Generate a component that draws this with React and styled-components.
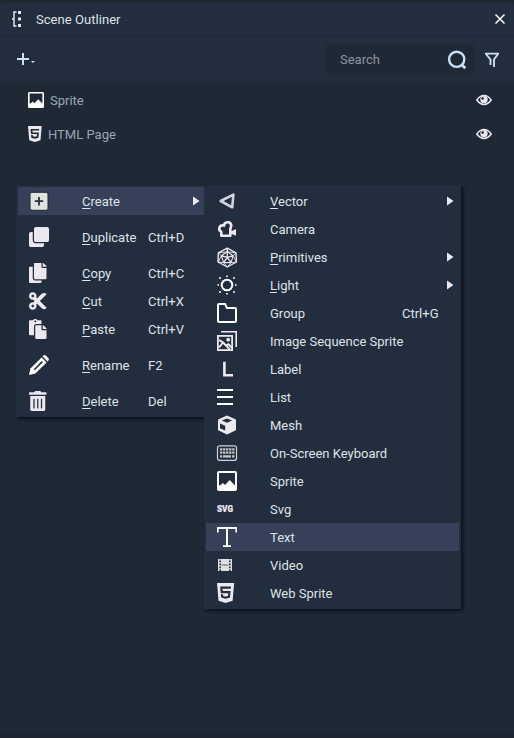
import React from "react";
import styled, { createGlobalStyle } from "styled-components";
import { FaClone, FaCopy, FaCut, FaPaste, FaTrashAlt, FaHtml5 } from "react-icons/fa";

const c = {
  body: "#1e2935",
  panel: "#222d3d",
  strip: "#1f2730",
  active: "#364159",
  text: "#dfe3e8",
  dim: "#9aa6b4",
  icon: "#ebe8f0",
  blue: "#cbe0f5",
};

const GlobalStyle = createGlobalStyle`
  *, *::before, *::after { box-sizing: border-box; }
  body { margin: 0; background: ${c.body}; overflow: hidden; }
`;

const Window = styled.main`
  position: relative;
  display: flex;
  flex-direction: column;
  width: 514px;
  height: 738px;
  background: ${c.body};
  border-top: 3px solid ${c.strip};
  border-bottom: 5px solid #1c2530;
  color: ${c.text};
  font: 13px/18px Roboto, sans-serif;
`;

const TitleBar = styled.header`
  display: flex;
  align-items: center;
  height: 33px;
  background: ${c.panel};
  border-bottom: 1px solid #1d2733;
  border-radius: 3px 3px 0 0;
`;

const Title = styled.h1`
  flex: 1;
  margin: 0;
  padding-top: 2px;
  font-size: 13px;
  font-weight: 400;
  letter-spacing: 0.05px;
`;

const Toolbar = styled.div`
  display: flex;
  align-items: center;
  height: 47px;
  background: ${c.panel};
`;

const IconButton = styled.button`
  display: flex;
  padding: 0;
  border: 0;
  background: none;
  color: inherit;
`;

const SearchBox = styled.label`
  display: flex;
  align-items: center;
  justify-content: space-between;
  width: 148px;
  height: 31px;
  margin-left: auto;
  padding-left: 14px;
  border-radius: 2px;
  background: ${c.body};
  color: #8d959f;
`;

const Tree = styled.ul`
  margin: 0;
  padding: 0;
  list-style: none;
`;

const TreeRow = styled.li`
  display: flex;
  align-items: center;
  height: 34px;
  padding: 0 22px 0 28px;
  color: ${c.dim};
`;

const TreeName = styled.span`
  flex: 1;
  margin-left: 6px;
  padding-top: 2px;
`;

const Menu = styled.ul`
  position: absolute;
  top: 182px;
  left: ${(p) => p.$left}px;
  width: ${(p) => p.$width}px;
  margin: 0;
  padding: 2px;
  list-style: none;
  background: ${c.panel};
  box-shadow: 2px 2px 3px rgba(5, 9, 16, 0.75);
`;

const MenuItem = styled.li`
  display: grid;
  grid-template-columns: 58px ${(p) => p.$labelWidth}px 1fr 12px;
  align-items: center;
  height: 28px;
  margin-top: ${(p) => (p.$separated ? 8 : 0)}px;
  padding-left: 6px;
  background: ${(p) => (p.$active ? c.active : "transparent")};
`;

const Label = styled.span`
  padding-top: 2px;
  white-space: nowrap;
`;

const Mnemonic = styled.span`
  text-decoration: underline;
  text-underline-offset: 2px;
  text-decoration-thickness: 1px;
  text-decoration-skip-ink: none;
`;

const Glyph = styled.svg`
  display: block;
  overflow: visible;
`;

const Slot = ({ children }) => (
  <Glyph width="28" height="28" viewBox="0 0 28 28" fill={c.icon} color={c.icon}>
    {children}
  </Glyph>
);

const Arrow = () => (
  <Glyph width="7" height="10" viewBox="0 0 7 10" fill={c.icon}>
    <path d="M0 .5L6.5 5L0 9.5Z" />
  </Glyph>
);

const PictureShape = () => (
  <>
    <rect x="1" y="1" width="18" height="18" rx="1" fill="none" stroke="#fff" strokeWidth="2" />
    <path d="M1 15L3.5 14L6 12L8 14L12.7 9L18 14.5H19V19H1Z" fill="#fff" />
  </>
);

const fit = { preserveAspectRatio: "xMinYMid" };

const icons = {
  create: (
    <>
      <rect x="6" y="5.3" width="18" height="18" rx="2" fill="#dfe3dc" stroke="#1c2733" strokeWidth="1" />
      <path d="M15 10V18.4M10.8 14.2H19.2" stroke="#26313f" strokeWidth="1.8" />
    </>
  ),
  duplicate: <FaClone x="5" y="4" size={20} {...fit} />,
  copy: <FaCopy x="5" y="4" size={20} {...fit} />,
  cut: <FaCut x="5" y="4" size={20} {...fit} />,
  paste: <FaPaste x="5" y="4" size={20} {...fit} />,
  rename: (
    <>
      <path d="M5 24L6.4 17.6L17.6 6.4L22.6 11.4L11.4 22.6Z" fill="#fff" />
      <path d="M10.2 18.8L18.4 10.6" stroke={c.panel} strokeWidth="1.6" />
      <path d="M18.6 5.4L19.4 4.6Q20.5 3.6 21.8 4.6L24.4 7.2Q25.4 8.5 24.4 9.6L23.6 10.4Z" fill="#fff" />
    </>
  ),
  remove: <FaTrashAlt x="5" y="4" size={20} {...fit} />,
  vector: <path d="M8.7 14L21.4 7.7L20.2 20.3Z" fill="none" stroke="#d2d4da" strokeWidth="2.6" strokeLinejoin="round" />,
  camera: (
    <>
      <path
        d="M9.3 20.8V16.9C5.8 15.2 7 9.4 12 10.6C12.2 6.4 18.6 6.2 19.2 10C19.4 11.8 18.3 12.8 18.3 14.3V20.8Z"
        fill="none" stroke={c.icon} strokeWidth="2.6" strokeLinejoin="round"
      />
      <path d="M18.5 15.8H20.5L24 13.9V20.8L20.5 19.2H18.5Z" />
    </>
  ),
  primitives: (
    <g fill="none" stroke={c.icon} strokeWidth="1.4" strokeLinejoin="round">
      <path d="M15.3 5.2L24 9.8L24.4 19L15.3 24L6 19L6.3 9.8Z" />
      <path d="M15.3 8.7L21.2 12.8L19 19.6H11.6L9.3 12.8Z" strokeWidth="1.1" />
      <path d="M15.3 5.3V14.4M9.3 12.8L15.3 14.4L21.2 12.8M11.6 19.6L15.3 14.4L19 19.6" />
      <path d="M6.5 10L9.3 12.8L6.3 19L11.6 19.6L15.3 24L19 19.6L24.4 19L21.2 12.8L24 10L15.3 8.7L6.5 10" strokeWidth=".9" />
    </g>
  ),
  light: (
    <>
      <circle cx="15" cy="14" r="5.3" fill="none" stroke="#fff" strokeWidth="2" />
      <path
        d="M15 4.4V6M15 22V23.6M5.4 14H7M23 14H24.6M7.4 6.4L8.6 7.6M21.4 20.4L22.6 21.6M22.6 6.4L21.4 7.6M8.6 20.4L7.4 21.6"
        stroke="#fff" strokeWidth="1.6"
      />
    </>
  ),
  group: (
    <path
      d="M7 5H13.2L14.8 9H23Q24 9 24 10V22Q24 23 23 23H7Q6 23 6 22V6Q6 5 7 5Z"
      fill="none" stroke="#fff" strokeWidth="2" strokeLinejoin="round"
    />
  ),
  sequence: (
    <>
      <path d="M9 4H25V20H23.4V5.6H9Z" />
      <rect x="5.9" y="8.9" width="14.2" height="14.2" fill="none" stroke={c.icon} strokeWidth="1.8" />
      <circle cx="16.2" cy="12.7" r="1.9" />
      <path d="M7 13L11.2 15.6L17.6 22.4M7 20.5L10.6 16M14.4 18.4L16.4 17.2L19.6 20.6" fill="none" stroke={c.icon} strokeWidth="2" />
    </>
  ),
  label: <path d="M12.4 6.7V20.3H21" fill="none" stroke={c.icon} strokeWidth="2.6" />,
  list: <path d="M5 6H21V8H5ZM5 13H21V15H5ZM5 20H21V22H5Z" fill="#fff" />,
  mesh: (
    <>
      <path d="M15 4.6L23.4 8.2Q24 8.5 24 9.3V18.4Q24 19.2 23.4 19.5L15 23.4L6.6 19.5Q6 19.2 6 18.4V9.3Q6 8.5 6.6 8.2Z" />
      <path d="M15 7.4L20.2 9.6L15 11.7L9.8 9.6Z" fill={c.panel} />
      <path d="M8 12.4L13.2 14.8V19.4L8 17.2Z" fill={c.panel} />
    </>
  ),
  keyboard: (
    <>
      <rect x="5.5" y="6.8" width="19" height="14.5" rx="2" fill="none" stroke="#d2d4d8" strokeWidth="1.2" />
      <path d="M8 10.4H22.5M8 13.6H22.5" stroke="#c6c9ce" strokeWidth="2.4" strokeDasharray="2.3 .75" />
      <path d="M8 17.4H10.2M11 17.4H19M20 17.4H22.5" stroke="#c6c9ce" strokeWidth="2.4" />
    </>
  ),
  sprite: <g transform="translate(5 4)"><PictureShape /></g>,
  svg: (
    <text x="5" y="17" fontFamily="Roboto, sans-serif" fontSize="8.6" fontWeight="900" textLength="16" lengthAdjust="spacingAndGlyphs" stroke={c.icon} strokeWidth=".2">
      SVG
    </text>
  ),
  text: <path d="M5 4H25V9.5H23.4V6H16V22.3H19V24H11V22.3H14V6H6.6V9.5H5Z" fill="#fff" />,
  video: (
    <>
      <path d="M6 8H20V20H6Z" fill="#e0e0e2" />
      <path d="M8.2 8V20M17.8 8V20" stroke={c.panel} strokeWidth="1.6" strokeDasharray="1.6 1.4" strokeDashoffset="-1.6" />
      <path d="M9.5 14H16.5" stroke={c.panel} strokeWidth=".7" />
    </>
  ),
  web: <FaHtml5 x="5" y="2.6" size={22.9} {...fit} />,
};

const contextItems = [
  { icon: "create", key: "C", rest: "reate", arrow: true, active: true },
  { icon: "duplicate", key: "D", rest: "uplicate", shortcut: "Ctrl+D", separated: true },
  { icon: "copy", key: "C", rest: "opy", shortcut: "Ctrl+C", separated: true },
  { icon: "cut", key: "C", rest: "ut", shortcut: "Ctrl+X" },
  { icon: "paste", key: "P", rest: "aste", shortcut: "Ctrl+V" },
  { icon: "rename", key: "R", rest: "ename", shortcut: "F2", separated: true },
  { icon: "remove", key: "D", rest: "elete", shortcut: "Del", separated: true },
];

const createItems = [
  { icon: "vector", key: "V", rest: "ector", arrow: true },
  { icon: "camera", rest: "Camera" },
  { icon: "primitives", key: "P", rest: "rimitives", arrow: true },
  { icon: "light", key: "L", rest: "ight", arrow: true },
  { icon: "group", rest: "Group", shortcut: "Ctrl+G" },
  { icon: "sequence", rest: "Image Sequence Sprite" },
  { icon: "label", rest: "Label" },
  { icon: "list", rest: "List" },
  { icon: "mesh", rest: "Mesh" },
  { icon: "keyboard", rest: "On-Screen Keyboard" },
  { icon: "sprite", rest: "Sprite" },
  { icon: "svg", rest: "Svg" },
  { icon: "text", rest: "Text", active: true },
  { icon: "video", rest: "Video" },
  { icon: "web", rest: "Web Sprite" },
];

const PopupMenu = ({ items, left, width, labelWidth }) => (
  <Menu $left={left} $width={width}>
    {items.map((it) => (
      <MenuItem key={it.icon} $labelWidth={labelWidth} $active={it.active} $separated={it.separated}>
        <Slot>{icons[it.icon]}</Slot>
        <Label>
          {it.key && <Mnemonic>{it.key}</Mnemonic>}
          {it.rest}
        </Label>
        <Label>{it.shortcut}</Label>
        {it.arrow && <Arrow />}
      </MenuItem>
    ))}
  </Menu>
);

const Eye = () => (
  <Glyph width="16" height="12" viewBox="0 0 16 12">
    <path d="M.8 6Q4 1.6 8 1.6T15.2 6Q12 10.4 8 10.4T.8 6Z" fill="none" stroke={c.icon} strokeWidth="1.5" />
    <circle cx="8" cy="5.6" r="3.7" fill={c.icon} />
    <circle cx="6.7" cy="4.5" r="1.3" fill={c.body} />
  </Glyph>
);

export default function App() {
  return (
    <>
      <GlobalStyle />
      <Window>
        <TitleBar>
          <Glyph width="36" height="32" viewBox="0 0 36 32" fill={c.icon}>
            <path d="M18 8H21V11H18ZM18 14.5H21V17.5H18ZM18 21H21V24H18Z" />
            <path d="M16.5 9H14V23H16.5M12 16H14" fill="none" stroke={c.icon} strokeWidth="1.4" />
          </Glyph>
          <Title>Scene Outliner</Title>
          <IconButton aria-label="Close">
            <Glyph width="20" height="32" viewBox="0 0 20 32" stroke="#fff" strokeWidth="1.5">
              <path d="M1.5 11.5L10.5 20.5M10.5 11.5L1.5 20.5" />
            </Glyph>
          </IconButton>
        </TitleBar>
        <Toolbar>
          <IconButton aria-label="Add">
            <Glyph width="40" height="47" viewBox="0 0 40 47">
              <path d="M23 17V29M17 23H29" stroke={c.blue} strokeWidth="2" />
              <path d="M31 25H35L33 27Z" fill={c.blue} />
            </Glyph>
          </IconButton>
          <SearchBox>
            Search
            <Glyph width="28" height="31" viewBox="0 0 28 31" fill="none" stroke={c.blue}>
              <circle cx="10.7" cy="15.3" r="7.6" strokeWidth="2.4" />
              <path d="M15.5 20.5L19.3 24.3" strokeWidth="2.8" />
            </Glyph>
          </SearchBox>
          <IconButton aria-label="Filter">
            <Glyph width="40" height="47" viewBox="0 0 40 47" fill="none" stroke={c.blue} strokeWidth="1.9">
              <path d="M16.5 29V23.5L12 18V17.6H24V18L20 23.5V31" />
            </Glyph>
          </IconButton>
        </Toolbar>
        <Tree>
          <TreeRow>
            <Glyph width="16" height="16" viewBox="0 0 20 20"><PictureShape /></Glyph>
            <TreeName>Sprite</TreeName>
            <Eye />
          </TreeRow>
          <TreeRow>
            <Glyph width="14" height="16" viewBox="0 0 14 16" color={c.icon} fill={c.icon}>
              <FaHtml5 x="0" y="-1.1" size={18.3} {...fit} />
            </Glyph>
            <TreeName>HTML Page</TreeName>
            <Eye />
          </TreeRow>
        </Tree>
        <PopupMenu items={contextItems} left={16} width={191} labelWidth={66} />
        <PopupMenu items={createItems} left={204} width={257} labelWidth={132} />
      </Window>
    </>
  );
}
